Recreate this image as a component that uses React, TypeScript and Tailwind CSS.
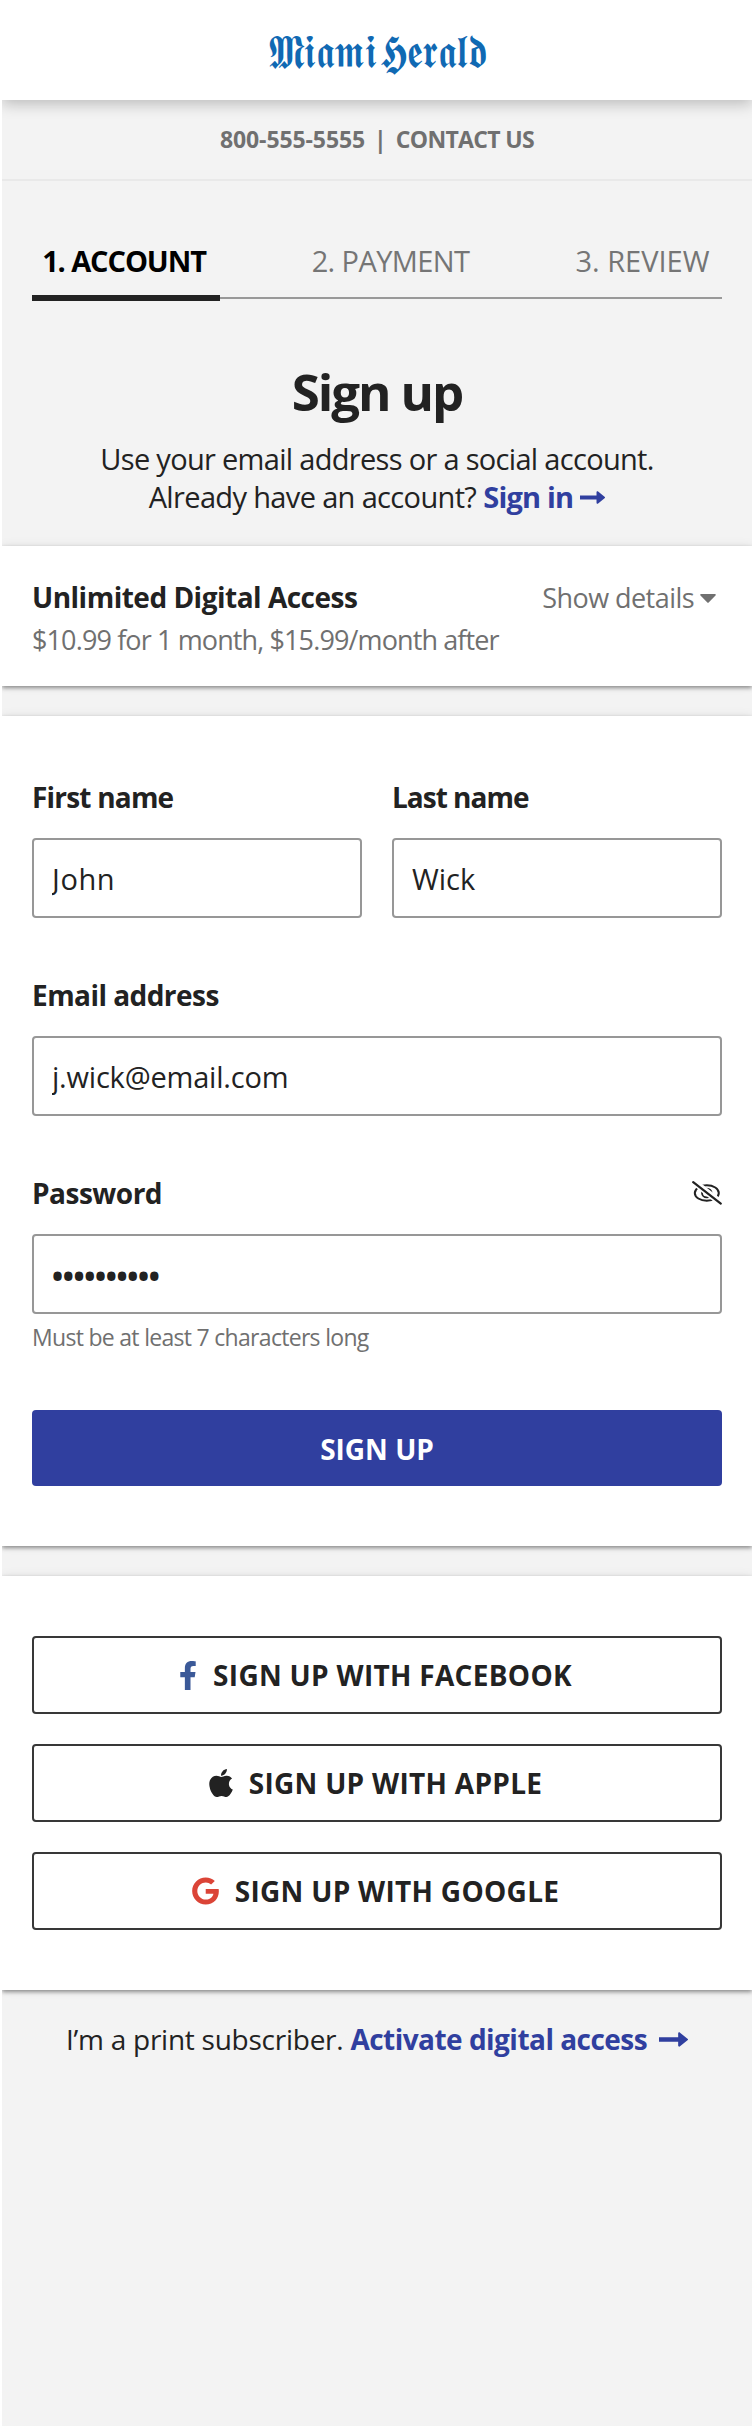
import type { ReactNode } from "react";
import { FaApple, FaFacebookF, FaGoogle } from "react-icons/fa";

const card =
  "bg-white px-[30px] shadow-[0_2px_4px_rgba(0,0,0,0.4),0_0_10px_rgba(0,0,0,0.08)]";
const inputBox =
  "block h-[80px] w-full rounded-[4px] border-2 border-[#979797] bg-white px-[18px] text-[#222] outline-none";
const label = "block text-[28px] leading-[42px] font-bold";

function Logo() {
  return (
    <span
      aria-label="Miami Herald"
      className="block scale-x-[0.825] pl-[4px] text-[47px] leading-[96px] whitespace-nowrap text-[#1069b3] [word-spacing:-8px]"
    >
      𝕸𝖎𝖆𝖒𝖎 𝕳𝖊𝖗𝖆𝖑𝖉
    </span>
  );
}

function Arrow({ className }: { className: string }) {
  return (
    <svg viewBox="0 0 28 14" fill="currentColor" className={className} aria-hidden="true">
      <path d="M0 4.8h18.5V1.2c0-1 1.1-1.5 1.8-.8l7.2 5.8a1 1 0 0 1 0 1.6l-7.2 5.8c-.7.7-1.8.2-1.8-.8V9.2H0z" />
    </svg>
  );
}

function EyeOff() {
  return (
    <svg width="30" height="24" viewBox="0 0 30 24" fill="none" stroke="#222" aria-hidden="true">
      <ellipse cx="14.8" cy="12" rx="12" ry="7.8" strokeWidth="2" />
      <ellipse cx="14.8" cy="12" rx="4.8" ry="4.4" strokeWidth="1.8" />
      <path d="M-1 -1.5L31 23.8" stroke="#fff" strokeWidth="6.5" />
      <path d="M1.2 1.2L28.8 22.6" strokeWidth="2.2" strokeLinecap="round" />
    </svg>
  );
}

function SocialButton({ icon, children }: { icon: ReactNode; children: ReactNode }) {
  return (
    <button className="flex h-[78px] w-full items-center justify-center gap-[16px] rounded-[4px] border-2 border-[#383838] pr-[3px] text-[28px] font-bold tracking-[0.3px]">
      {icon}
      <span>{children}</span>
    </button>
  );
}

export default function App() {
  return (
    <div className="min-h-[2426px] w-full bg-white pl-[2px] font-['Open_Sans','Noto_Sans',sans-serif] text-[#222]">
      <div className="min-h-[2426px] overflow-hidden bg-[#f3f3f3]">
        <header className="relative z-10 flex h-[100px] items-center justify-center bg-white shadow-[0_4px_14px_rgba(0,0,0,0.23)]">
          <Logo />
        </header>

        <div className="flex h-[81px] items-center justify-center gap-[9px] border-b-2 border-[#e9e9e9] text-[23px] font-bold text-[#707070]">
          <span className="tracking-[-0.1px]">800-555-5555</span>
          <span>|</span>
          <span className="tracking-[-0.65px]">CONTACT US</span>
        </div>

        <nav className="mx-[30px] mt-[59px]">
          <div className="flex justify-between text-center text-[29px] leading-[42px] whitespace-nowrap text-[#757575]">
            <span className="w-[188px] pr-[4px] font-bold tracking-[-1.1px] text-black">1. ACCOUNT</span>
            <span className="w-[177px] pr-[2px] tracking-[-0.6px]">2. PAYMENT</span>
            <span className="w-[159px]">3. REVIEW</span>
          </div>
          <div className="mt-[13px] flex items-center">
            <div className="h-[6px] w-[188px] bg-[#222]" />
            <div className="h-[2px] flex-1 bg-[#999]" />
          </div>
        </nav>

        <section className="mt-[60px] text-center">
          <h1 className="text-[51px] leading-[60px] font-bold tracking-[-2.1px]">Sign up</h1>
          <p className="mt-[19px] text-[29px] leading-[38px] tracking-[-0.69px]">
            Use your email address or a social account.
          </p>
          <p className="flex items-center justify-center text-[29px] leading-[38px] tracking-[-0.65px]">
            <span>Already have an account?</span>
            <a className="ml-[7px] flex items-center gap-[7px] font-bold tracking-[-0.8px] text-[#303f9f]">
              Sign in
              <Arrow className="h-[13px] w-[25px]" />
            </a>
          </p>
        </section>

        <section className={`${card} mt-[30px] h-[140px] pt-[30px]`}>
          <div className="flex items-center justify-between leading-[42px]">
            <h2 className="text-[28px] font-bold tracking-[-0.5px]">Unlimited Digital Access</h2>
            <div className="flex items-center pt-[2px] pr-[6px] text-[27px] leading-[40px] tracking-[-0.55px] text-[#707070]">
              Show details
              <svg width="16" height="9" viewBox="0 0 16 9" fill="currentColor" className="ml-[6px]">
                <path d="M1.2 0h13.6c.9 0 1.3 1 .7 1.6L8.9 8.3a1.2 1.2 0 0 1-1.8 0L.5 1.6C-.1 1 .3 0 1.2 0z" />
              </svg>
            </div>
          </div>
          <p className="pt-[1px] text-[27px] leading-[42px] tracking-[-0.88px] text-[#707070]">
            $10.99 for 1 month, $15.99/month after
          </p>
        </section>

        <form className={`${card} mt-[30px] h-[830px] pt-[60px]`}>
          <div className="grid grid-cols-2 gap-[30px]">
            <div className="flex flex-col gap-[20px]">
              <label className={`${label} tracking-[-0.8px]`}>First name</label>
              <input className={`${inputBox} text-[29px] tracking-[0.6px]`} defaultValue="John" />
            </div>
            <div className="flex flex-col gap-[20px]">
              <label className={`${label} tracking-[-1px]`}>Last name</label>
              <input className={`${inputBox} text-[29px]`} defaultValue="Wick" />
            </div>
          </div>
          <div className="mt-[56px] flex flex-col gap-[20px]">
            <label className={`${label} tracking-[-0.55px]`}>Email address</label>
            <input className={`${inputBox} text-[29px] tracking-[-0.2px]`} defaultValue="j.wick@email.com" />
          </div>
          <div className="mt-[56px]">
            <div className="flex items-center justify-between">
              <label className={`${label} tracking-[-0.5px]`}>Password</label>
              <EyeOff />
            </div>
            <input
              type="password"
              className={`${inputBox} mt-[20px] pt-[2px] pl-[16px] text-[40px] tracking-[-4.3px]`}
              defaultValue="babayaga14"
            />
            <p className="mt-[6px] text-[23px] leading-[34px] tracking-[-0.7px] text-[#707070]">
              Must be at least 7 characters long
            </p>
          </div>
          <button
            type="button"
            className="mt-[56px] h-[76px] w-full rounded-[4px] bg-[#303f9f] pt-[2px] text-[28px] font-bold text-white"
          >
            SIGN UP
          </button>
        </form>

        <section className={`${card} mt-[30px] flex h-[414px] flex-col gap-[30px] pt-[60px]`}>
          <SocialButton icon={<FaFacebookF className="h-[29px] w-[18px] text-[#3b5998]" />}>
            SIGN UP WITH FACEBOOK
          </SocialButton>
          <SocialButton icon={<FaApple className="h-[32px] w-[24px]" />}>
            SIGN UP WITH APPLE
          </SocialButton>
          <SocialButton icon={<FaGoogle className="h-[28px] w-[27px] text-[#db4437]" />}>
            SIGN UP WITH GOOGLE
          </SocialButton>
        </section>

        <p className="mt-[30px] flex items-center justify-center text-[28px] leading-[38px] tracking-[-0.25px]">
          <span>I’m a print subscriber.</span>
          <a className="ml-[7px] flex items-center gap-[12px] font-bold tracking-[-0.53px] text-[#303f9f]">
            Activate digital access
            <Arrow className="h-[15px] w-[29px]" />
          </a>
        </p>
      </div>
    </div>
  );
}
